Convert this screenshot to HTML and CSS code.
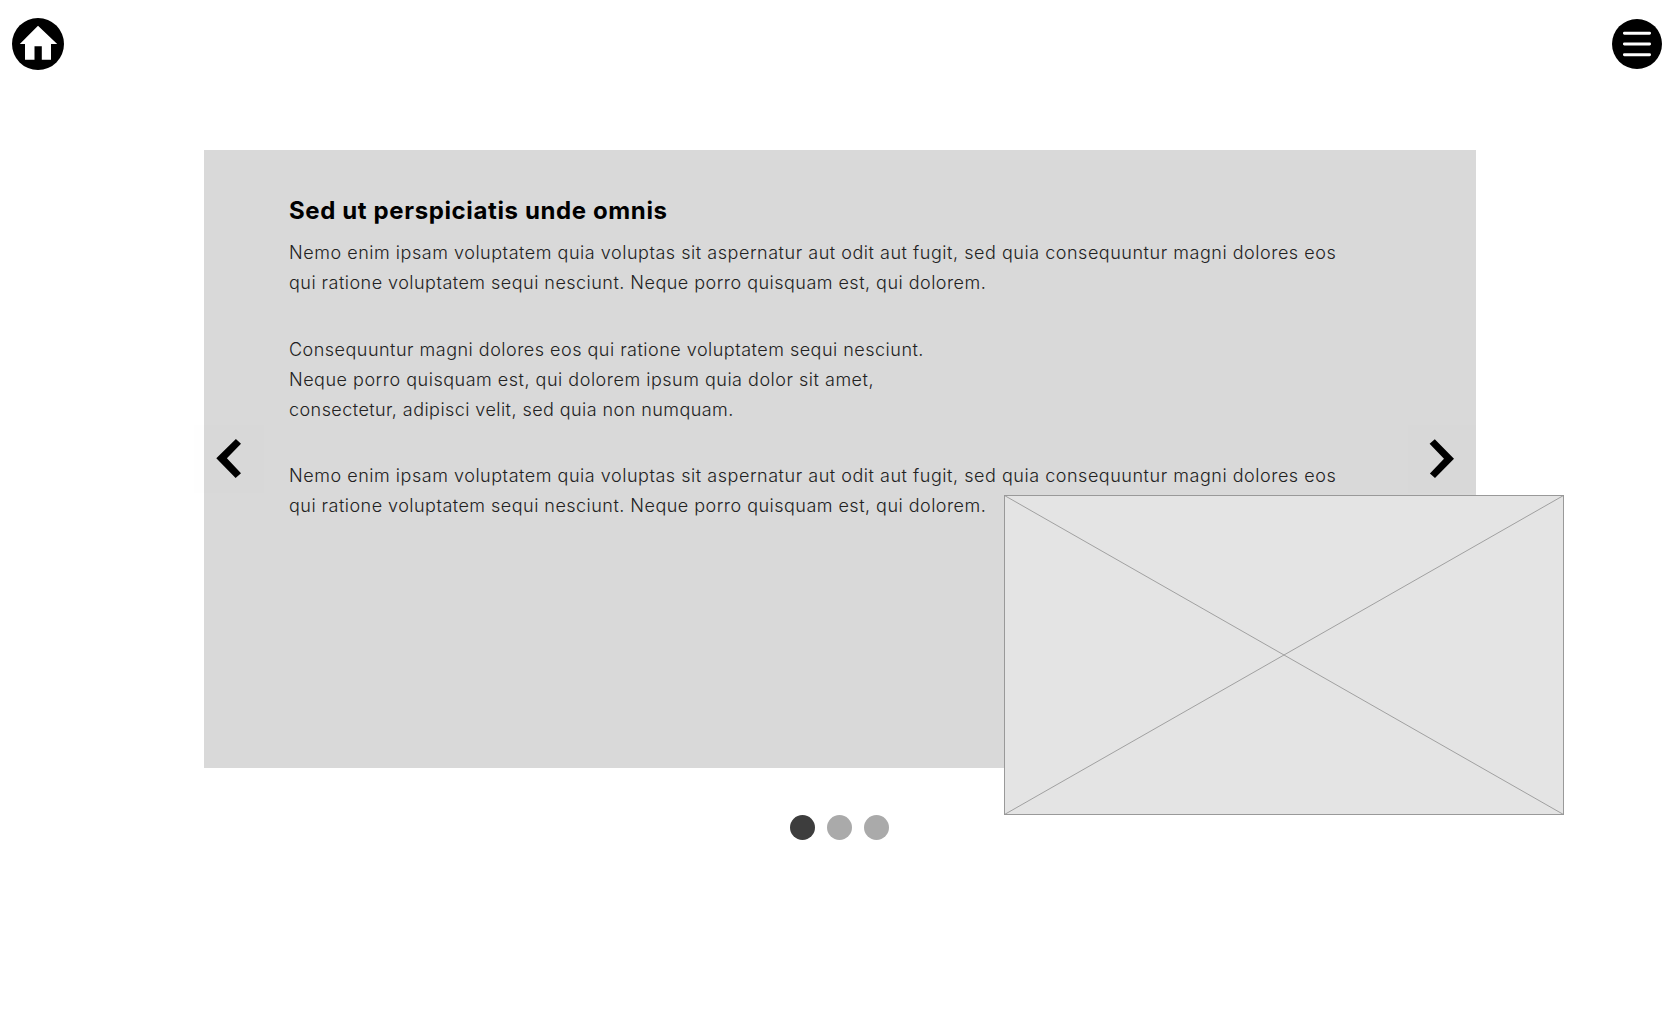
FILE: index.html
```html
<!DOCTYPE html>
<html lang="la">
<head>
<meta charset="utf-8">
<title>Sed ut perspiciatis</title>
<link rel="stylesheet" href="styles.css">
</head>
<body>
<header class="topbar">
  <a class="home" href="#" aria-label="Home">
    <svg width="52" height="52" viewBox="0 0 52 52"><circle cx="26" cy="26" r="26"/><path fill="#fff" d="M26 7.7 7.8 26H13v15.8h9.5V28.2h7.3v13.6H39V26h6.2z"/></svg>
  </a>
  <a class="menu" href="#" aria-label="Menu">
    <svg width="50" height="50" viewBox="0 0 50 50"><circle cx="25" cy="25" r="25"/><path stroke="#fff" stroke-width="2.9" stroke-linecap="round" d="M12.4 14.2h25.2M12.4 25h25.2M12.4 35.7h25.2"/></svg>
  </a>
</header>
<main class="carousel">
  <section class="slide">
    <button class="arrow arrow-prev" aria-label="Previous">
      <svg width="70" height="68" viewBox="0 0 70 68"><path d="M22.3 33.3 41.9 14l5.1 4.7L32.9 33.3 47 48.3 41.6 53z"/></svg>
    </button>
    <article class="copy">
      <h1 class="title">Sed ut perspiciatis unde omnis</h1>
      <p class="text"><span class="wide">Nemo enim ipsam voluptatem quia voluptas sit aspernatur aut odit aut fugit, sed quia consequuntur magni dolores eos</span><br><span class="mid">qui ratione voluptatem sequi nesciunt. Neque porro quisquam est, qui dolorem.</span></p>
      <p class="text"><span class="line-a">Consequuntur magni dolores eos qui ratione voluptatem sequi nesciunt.</span><br><span class="line-b">Neque porro quisquam est, qui dolorem ipsum quia dolor sit amet,</span><br><span class="line-c">consectetur, adipisci velit, sed quia non numquam.</span></p>
      <p class="text"><span class="wide">Nemo enim ipsam voluptatem quia voluptas sit aspernatur aut odit aut fugit, sed quia consequuntur magni dolores eos</span><br><span class="mid">qui ratione voluptatem sequi nesciunt. Neque porro quisquam est, qui dolorem.</span></p>
    </article>
    <button class="arrow arrow-next" aria-label="Next">
      <svg width="68" height="68" viewBox="0 0 68 68"><path d="M46 33.8 26.8 14.2 21.6 18.7 36 33.8 21.9 48.6 27 53z"/></svg>
    </button>
    <svg class="picture" width="560" height="320" viewBox="0 0 560 320"><rect x=".5" y=".5" width="559" height="319" fill="#e4e4e4" stroke="#999"/><path stroke="#999" stroke-width=".9" d="M.5.5l559 319M559.5.5l-559 319"/></svg>
  </section>
  <nav class="dots">
    <span class="dot dot-active"></span><span class="dot"></span><span class="dot"></span>
  </nav>
</main>
</body>
</html>
```
FILE: styles.css
```css
* { box-sizing: border-box; }
body { margin: 0; background: #fff; font-family: Inter, sans-serif; }
.topbar { display: flex; justify-content: space-between; align-items: center; height: 88px; padding: 0 18px 0 12px; }
.home, .menu { display: flex; }
.carousel { display: flex; flex-direction: column; align-items: center; padding-top: 62px; }
.slide { position: relative; display: flex; align-items: center; width: 1272px; height: 618px; background: #d9d9d9; }
.arrow { display: flex; flex: none; padding: 0; border: 0; background: rgba(0, 0, 0, .005); }
.arrow-prev { margin-left: -10px; }
.copy { flex: 1; align-self: stretch; padding: 44px 0 0 25px; white-space: nowrap; }
.title { margin: 0 0 10px; font-size: 24px; line-height: 34px; font-weight: 700; color: #000; letter-spacing: .62px; }
.text { margin: 0 0 36.6px; font-size: 18px; line-height: 30px; font-weight: 300; color: #222; }
.wide { letter-spacing: .53px; }
.mid { letter-spacing: .475px; }
.line-a { letter-spacing: .49px; }
.line-b { letter-spacing: .51px; }
.line-c { letter-spacing: .435px; }
.picture { position: absolute; left: 800px; top: 345px; }
.dots { display: flex; gap: 12px; margin: 47px 2px 0 0; }
.dot { width: 25px; height: 25px; border-radius: 50%; background: #aaa; }
.dot-active { background: #3d3d3d; }
```
